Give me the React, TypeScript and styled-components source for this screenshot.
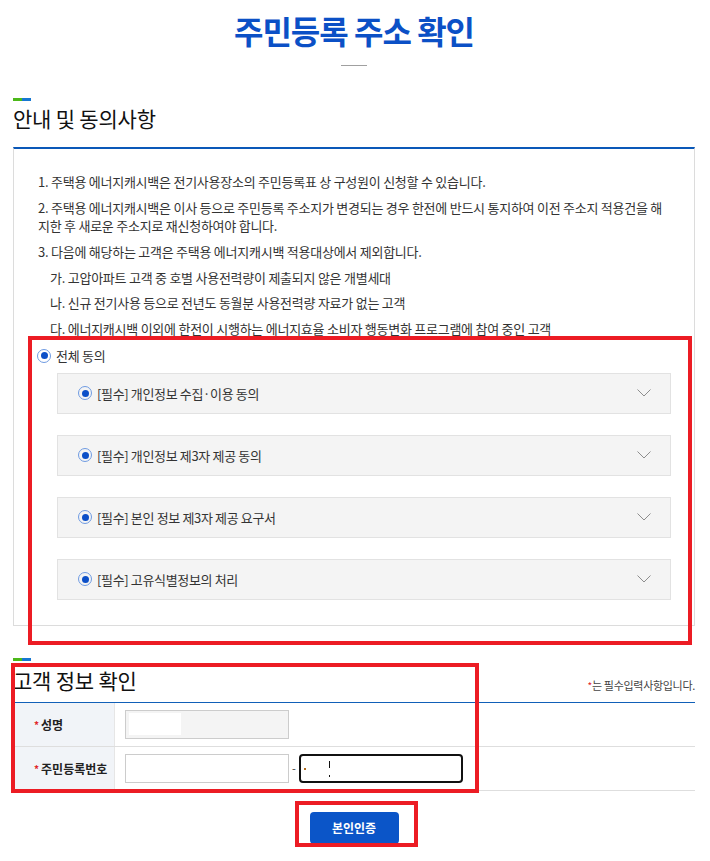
import React from 'react';
import styled, { createGlobalStyle } from 'styled-components';

const GlobalStyle = createGlobalStyle`
  * { box-sizing: border-box; }
  body {
    margin: 0;
    background: #fff;
    font-family: "Noto Sans CJK KR", "Noto Sans", sans-serif;
  }
`;

const notices = [
  '1. 주택용 에너지캐시백은 전기사용장소의 주민등록표 상 구성원이 신청할 수 있습니다.',
  '2. 주택용 에너지캐시백은 이사 등으로 주민등록 주소지가 변경되는 경우 한전에 반드시 통지하여 이전 주소지 적용건을 해지한 후 새로운 주소지로 재신청하여야 합니다.',
];

const excluded = [
  '가. 고압아파트 고객 중 호별 사용전력량이 제출되지 않은 개별세대',
  '나. 신규 전기사용 등으로 전년도 동월분 사용전력량 자료가 없는 고객',
  '다. 에너지캐시백 이외에 한전이 시행하는 에너지효율 소비자 행동변화 프로그램에 참여 중인 고객',
];

const agreements = [
  '[필수] 개인정보 수집·이용 동의',
  '[필수] 개인정보 제3자 제공 동의',
  '[필수] 본인 정보 제3자 제공 요구서',
  '[필수] 고유식별정보의 처리',
];

const Chevron = () => (
  <svg width="14" height="8" viewBox="0 0 14 8">
    <polyline points="0.5,0.5 7,7 13.5,0.5" fill="none" stroke="#8d8d8d" strokeWidth="1" />
  </svg>
);

export default function App() {
  return (
    <Page>
      <GlobalStyle />
      <Title>주민등록 주소 확인</Title>
      <TitleRule />

      <SectionMark />
      <SectionTitle>안내 및 동의사항</SectionTitle>

      <InfoBox>
        <NoticeList>
          {notices.map((n) => (
            <Notice key={n}>{n}</Notice>
          ))}
          <Notice>
            3. 다음에 해당하는 고객은 주택용 에너지캐시백 적용대상에서 제외합니다.
            <SubList>
              {excluded.map((e) => (
                <SubItem key={e}>{e}</SubItem>
              ))}
            </SubList>
          </Notice>
        </NoticeList>

        <AgreeAll>
          <Radio />
          <span>전체 동의</span>
        </AgreeAll>

        <AccordionList>
          {agreements.map((a) => (
            <Accordion key={a}>
              <AccordionLabel>
                <Radio />
                <span>{a}</span>
              </AccordionLabel>
              <Chevron />
            </Accordion>
          ))}
        </AccordionList>
      </InfoBox>

      <SectionMark $gap={32} />
      <SectionHead>
        <SectionTitle $small>고객 정보 확인</SectionTitle>
        <Note>
          <Star>*</Star>는 필수입력사항입니다.
        </Note>
      </SectionHead>

      <FormTable>
        <FormRow>
          <LabelCell>
            <Star>*</Star> 성명
          </LabelCell>
          <ValueCell>
            <Field $disabled>
              <Mask />
            </Field>
          </ValueCell>
        </FormRow>
        <FormRow>
          <LabelCell>
            <Star>*</Star> 주민등록번호
          </LabelCell>
          <ValueCell>
            <Field />
            <Dash>-</Dash>
            <Field $focused>
              <Dot />
              <Caret $top={5} $h={7} />
              <Caret $top={19} $h={2} />
            </Field>
          </ValueCell>
        </FormRow>
      </FormTable>

      <ButtonRow>
        <AuthButton>본인인증</AuthButton>
      </ButtonRow>

      <Highlight style={{ left: 28, top: 336, width: 664, height: 309 }} />
      <Highlight style={{ left: 11, top: 663, width: 468, height: 130 }} />
      <Highlight style={{ left: 295, top: 801, width: 123, height: 46 }} />
    </Page>
  );
}

const Page = styled.div`
  position: relative;
  width: 710px;
  height: 861px;
  padding: 0 15px 0 13px;
  overflow: hidden;
  color: #333;
`;

const Title = styled.h1`
  margin: 0;
  padding-top: 10px;
  font-size: 32px;
  line-height: 40px;
  font-weight: 700;
  letter-spacing: -1px;
  color: #0b50c6;
  text-align: center;
`;

const TitleRule = styled.div`
  width: 26px;
  height: 1px;
  margin: 15px auto 0;
  background: #a0a0a0;
`;

const SectionMark = styled.div<{ $gap?: number }>`
  width: 18px;
  height: 3px;
  margin-top: ${(p) => p.$gap ?? 32}px;
  background: linear-gradient(to right, #4cb81a 50%, #1677d2 50%);
`;

const SectionTitle = styled.h2<{ $small?: boolean }>`
  margin: 3px 0 ${(p) => (p.$small ? 0 : 15)}px;
  font-size: 21px;
  line-height: 28px;
  font-weight: 400;
  letter-spacing: -0.2px;
  color: #111;
`;

const InfoBox = styled.div`
  border: 1px solid #dcdcdc;
  border-top: 2px solid #0a58b8;
  padding: 24px 12px 25px 24px;
`;

const NoticeList = styled.ul`
  margin: 0;
  padding: 0 12px 0 0;
  list-style: none;
  font-size: 13px;
  line-height: 18px;
  letter-spacing: -0.25px;
  color: #333;
`;

const Notice = styled.li`
  & + & {
    margin-top: 8px;
  }
`;

const SubList = styled.ul`
  margin: 0;
  padding: 0 0 0 12px;
  list-style: none;
`;

const SubItem = styled.li`
  margin-top: 7.5px;
`;

const Radio = styled.span`
  flex: none;
  width: 14px;
  height: 14px;
  border-radius: 50%;
  border: 1.5px solid #6f9be2;
  display: inline-flex;
  align-items: center;
  justify-content: center;

  &::after {
    content: '';
    width: 7px;
    height: 7px;
    border-radius: 50%;
    background: #0b4fc8;
  }
`;

const AgreeAll = styled.div`
  display: flex;
  align-items: center;
  gap: 5px;
  height: 18px;
  margin: 9px 0 0 -1px;
  font-size: 13px;
  letter-spacing: -0.25px;
  color: #333;
`;

const AccordionList = styled.div`
  display: flex;
  flex-direction: column;
  gap: 21px;
  margin: 8px 11px 0 19px;
`;

const Accordion = styled.div`
  height: 41px;
  padding: 0 19px 0 20px;
  display: flex;
  align-items: center;
  justify-content: space-between;
  background: #f4f4f4;
  border: 1px solid #e2e2e2;
`;

const AccordionLabel = styled.div`
  display: flex;
  align-items: center;
  gap: 5px;
  font-size: 13px;
  letter-spacing: -0.35px;
  color: #333;
`;

const SectionHead = styled.div`
  display: flex;
  align-items: flex-end;
  justify-content: space-between;
  margin-top: 2px;
  padding-bottom: 8px;
`;

const Note = styled.span`
  font-size: 11px;
  line-height: 16px;
  color: #444;
  letter-spacing: -0.3px;
`;

const Star = styled.span`
  color: #e0262a;
  font-size: 10px;
`;

const FormTable = styled.div`
  border-top: 1px solid #1160b8;
`;

const FormRow = styled.div`
  display: flex;
  height: 44px;
  border-bottom: 1px solid #dedede;
`;

const LabelCell = styled.div`
  width: 102px;
  padding-left: 21px;
  display: flex;
  align-items: center;
  gap: 2px;
  background: #f1f4f8;
  border-right: 1px solid #e6e6e6;
  font-size: 12px;
  font-weight: 700;
  color: #222;
`;

const ValueCell = styled.div`
  display: flex;
  align-items: center;
  padding-left: 10px;
`;

const Field = styled.div<{ $disabled?: boolean; $focused?: boolean }>`
  position: relative;
  width: 164px;
  height: 29px;
  background: ${(p) => (p.$disabled ? '#f4f4f4' : '#fff')};
  border: ${(p) => (p.$focused ? '2px solid #111' : '1px solid #cccccc')};
  border-radius: ${(p) => (p.$focused ? '4px' : '0')};
`;

const Mask = styled.span`
  position: absolute;
  left: 3px;
  top: 2px;
  width: 52px;
  height: 22px;
  background: #fff;
`;

const Dot = styled.span`
  position: absolute;
  left: 3px;
  top: 12px;
  width: 2px;
  height: 2px;
  background: #b06a1a;
`;

const Caret = styled.span<{ $top: number; $h: number }>`
  position: absolute;
  left: 28px;
  top: ${(p) => p.$top}px;
  width: 1px;
  height: ${(p) => p.$h}px;
  background: #111;
`;

const Dash = styled.span`
  width: 10px;
  text-align: center;
  font-size: 11px;
  color: #333;
`;

const ButtonRow = styled.div`
  display: flex;
  justify-content: center;
  margin-top: 21px;
`;

const AuthButton = styled.button`
  width: 89px;
  height: 32px;
  border: 0;
  border-radius: 4px;
  background: #0b55c8;
  color: #fff;
  font-family: inherit;
  font-size: 12px;
  font-weight: 700;
`;

const Highlight = styled.div`
  position: absolute;
  border: 4px solid #ec1c24;
  pointer-events: none;
`;
